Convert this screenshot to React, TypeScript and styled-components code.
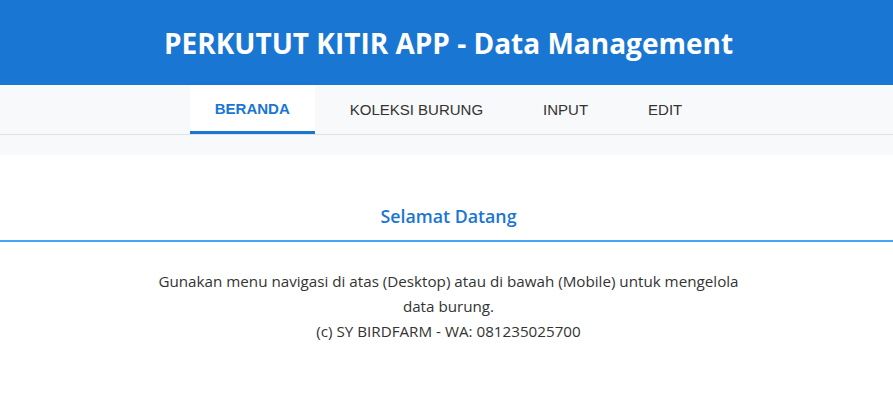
import React from "react";
import styled, { createGlobalStyle } from "styled-components";

const Global = createGlobalStyle`
  html, body { margin: 0; padding: 0; background: #f8f9fa; }
  body { font-family: "Open Sans", "Noto Sans", sans-serif; color: #333; }
  * { box-sizing: border-box; }
`;

const Header = styled.header`
  background: #1976d2;
  height: 85px;
  padding-left: 4px;
  display: flex;
  align-items: center;
  justify-content: center;
`;

const Title = styled.h1`
  margin: 0;
  color: #fff;
  font-family: "Open Sans", sans-serif;
  font-weight: 700;
  font-size: 28px;
`;

const Nav = styled.nav`
  background: #f8f9fa;
  border-bottom: 1px solid #dee2e6;
  display: flex;
  justify-content: center;
  align-items: center;
  gap: 10px;
  height: 50px;
  padding-left: 4px;
`;

const Tab = styled.a<{ $active?: boolean }>`
  font-family: "Liberation Sans", Arial, sans-serif;
  font-size: 15px;
  line-height: 17px;
  font-weight: ${(p) => (p.$active ? 700 : 400)};
  color: ${(p) => (p.$active ? "#1976d2" : "#333")};
  background: ${(p) => (p.$active ? "#fff" : "transparent")};
  border-bottom: ${(p) => (p.$active ? "3px solid #1976d2" : "none")};
  padding: 15px 25px;
  text-decoration: none;
  align-self: ${(p) => (p.$active ? "stretch" : "center")};
  cursor: pointer;
`;

const Spacer = styled.div`
  height: 20px;
  background: #f8f9fa;
`;

const Main = styled.main`
  background: #fff;
  padding-top: 49px;
  min-height: 250px;
`;

const Heading = styled.h2`
  margin: 0;
  padding-left: 4px;
  text-align: center;
  color: #1976d2;
  font-size: 17.8px;
  font-weight: 600;
  line-height: 24px;
  padding-bottom: 12px;
  border-bottom: 2px solid #42a5f5;
`;

const Text = styled.p`
  margin: 27px auto 0;
  max-width: 604px;
  padding-left: 4px;
  text-align: center;
  font-size: 15.2px;
  line-height: 25px;
  color: #333;
`;

export default function App() {
  const tabs = ["BERANDA", "KOLEKSI BURUNG", "INPUT", "EDIT"];
  return (
    <>
      <Global />
      <Header>
        <Title>PERKUTUT KITIR APP - Data Management</Title>
      </Header>
      <Nav>
        {tabs.map((t, i) => (
          <Tab key={t} $active={i === 0}>
            {t}
          </Tab>
        ))}
      </Nav>
      <Spacer />
      <Main>
        <Heading>Selamat Datang</Heading>
        <Text>
          Gunakan menu navigasi di atas (Desktop) atau di bawah (Mobile) untuk mengelola data burung.
          <br />
          (c) SY BIRDFARM - WA: 081235025700
        </Text>
      </Main>
    </>
  );
}
